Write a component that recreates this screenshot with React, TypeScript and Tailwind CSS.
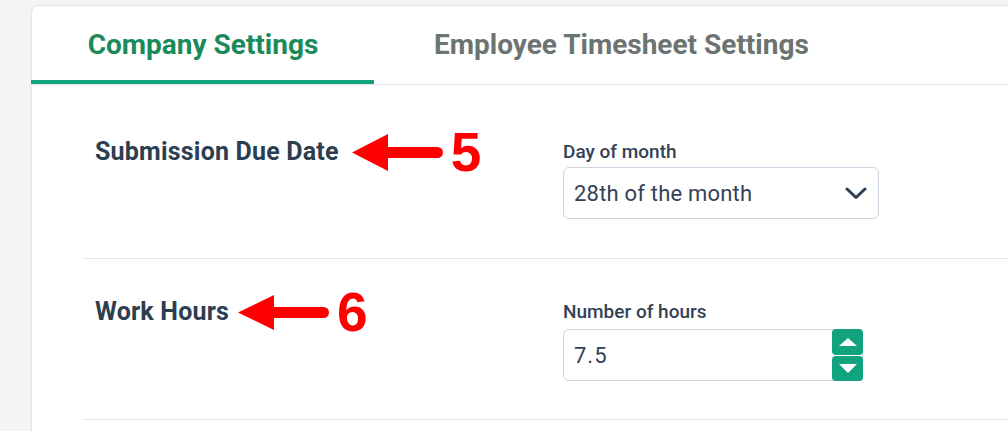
import React from "react";

function Arrow({ w = 91, h = 37 }: { w?: number; h?: number }) {
  const head = 36;
  const shaft = 11;
  const cy = h / 2;
  return (
    <svg width={w} height={h} viewBox={`0 0 ${w} ${h}`} className="block">
      <polygon points={`0,${cy} ${head},0 ${head},${h}`} fill="#ff0000" />
      <path
        d={`M ${head - 1} ${cy - shaft / 2} L ${w - shaft / 2} ${cy - shaft / 2} A ${shaft / 2} ${shaft / 2} 0 0 1 ${w - shaft / 2} ${cy + shaft / 2} L ${head - 1} ${cy + shaft / 2} Z`}
        fill="#ff0000"
      />
    </svg>
  );
}

function Heading({
  text,
  num,
  gap,
  arrowW,
  arrowH,
}: {
  text: string;
  num: string;
  gap: string;
  arrowW: number;
  arrowH: number;
}) {
  return (
    <div className="flex items-center pl-[13px] -mt-[18px]">
      <span className="text-[25px] leading-[30px] font-bold tracking-[0.2px] text-[#2c3e50]">{text}</span>
      <span className={gap}>
        <Arrow w={arrowW} h={arrowH} />
      </span>
      <span
        className="ml-[8px] text-[55px] leading-[60px] font-bold text-[#ff0000]"
        style={{ fontFamily: '"Liberation Sans", Arial, sans-serif' }}
      >
        {num}
      </span>
    </div>
  );
}

export default function App() {
  return (
    <div
      className="h-[431px] w-[1008px] overflow-hidden bg-[#f3f4f6]"
      style={{ fontFamily: 'Roboto, "Noto Sans", sans-serif' }}
    >
      <div className="ml-[31px] mt-[5px] w-[1100px] h-[600px] bg-white border border-[#e3e5e8] rounded-tl-[8px] shadow-[0_0_2px_rgba(0,0,0,0.04)]">
        {/* Tabs */}
        <div className="flex h-[79px] border-b border-[#e5e7eb]">
          <div className="relative w-[342px] flex items-center justify-center">
            <span className="text-[28px] font-bold text-[#1b8a5a]">Company Settings</span>
            <div className="absolute -left-px right-0 bottom-0 h-[4px] bg-[#12a37f]" />
          </div>
          <div className="flex items-center pl-[60px]">
            <span className="text-[28px] font-bold text-[#6c7472]">Employee Timesheet Settings</span>
          </div>
        </div>

        {/* Content */}
        <div className="pl-[50px] pt-[15px]">
          {/* Row 1 */}
          <div className="grid grid-cols-[481px_1fr] items-start border-b border-[#e5e7eb] pt-[40px] pb-[39px]">
            <Heading text="Submission Due Date" num="5" gap="ml-[13px]" arrowW={91} arrowH={37} />
            <div className="flex flex-col">
              <span className="text-[19px] leading-[24px] font-medium text-[#334155]">Day of month</span>
              <div className="mt-[3px] w-[316px] h-[52px] rounded-[6px] border border-[#cbd5e1] flex items-center justify-between pl-[10px] pr-[11px]">
                <span className="text-[22px] tracking-[0.2px] text-[#334155]">28th of the month</span>
                <svg width="22" height="13" viewBox="0 0 22 13" className="block">
                  <path d="M2 2 L11 10.5 L20 2" fill="none" stroke="#2c3e50" strokeWidth="3" strokeLinecap="round" strokeLinejoin="round" />
                </svg>
              </div>
            </div>
          </div>

          {/* Row 2 */}
          <div className="grid grid-cols-[481px_1fr] items-start border-b border-[#e5e7eb] pt-[41px] pb-[38px]">
            <Heading text="Work Hours" num="6" gap="ml-[9px]" arrowW={91} arrowH={35} />
            <div className="flex flex-col">
              <span className="text-[19px] leading-[24px] font-medium text-[#334155]">Number of hours</span>
              <div className="relative mt-[5px] w-[300px] h-[52px]">
                <div className="absolute inset-0 rounded-[6px] border border-[#cbd5e1] flex items-center pl-[10px]">
                  <span className="text-[22px] tracking-[1px] text-[#334155]">7.5</span>
                </div>
                <div className="absolute right-0 top-0 w-[31px] h-[26px] rounded-[4px] bg-[#11a37f] flex items-center justify-center">
                  <svg width="18" height="8" viewBox="0 0 18 8" className="block">
                    <polygon points="9,0 18,8 0,8" fill="#ffffff" />
                  </svg>
                </div>
                <div className="absolute right-0 bottom-0 w-[31px] h-[25px] rounded-[4px] bg-[#11a37f] flex items-center justify-center">
                  <svg width="18" height="9" viewBox="0 0 18 9" className="block">
                    <polygon points="0,0 18,0 9,9" fill="#ffffff" />
                  </svg>
                </div>
              </div>
            </div>
          </div>
        </div>
      </div>
    </div>
  );
}
